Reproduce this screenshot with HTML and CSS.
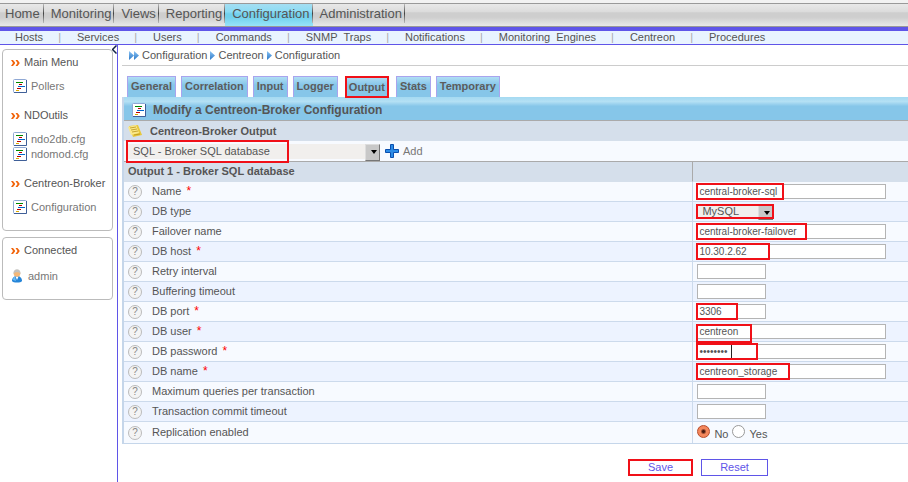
FILE: index.html
```html
<!DOCTYPE html>
<html lang="en">
<head>
    <meta charset="UTF-8">
    <meta name="viewport" content="width=device-width, initial-scale=1.0">
    <title>Centreon - Configuration</title>
    <link rel="stylesheet" href="styles.css">
</head>
<body>
    <svg class="sprite" aria-hidden="true">
        <linearGradient id="blue" x1="0" y1="0" x2="0" y2="1">
            <stop offset="0" stop-color="#8cc4f4"/>
            <stop offset="1" stop-color="#2a78c8"/>
        </linearGradient>
        <symbol id="icon-list" viewBox="0 0 14 14">
            <rect x="0.5" y="0.5" width="13" height="13" rx="1" fill="#fff" stroke="#8fa8d4"/>
            <path d="M13.5 1v12.500H1" fill="none" stroke="#3f5f98"/>
            <path d="M3 3.500h7" stroke="#080"/>
            <path d="M6 5.500h3" stroke="#b00"/>
            <path d="M5 7.500h7" stroke="#06c"/>
            <path d="M4 9.500h4" stroke="#b00"/>
            <path d="M3 11.500h3" stroke="#da0"/>
        </symbol>
        <symbol id="icon-raquo" viewBox="0 0 9 6">
            <path d="M0 0h2l2 2.500v1L2 6H0l2-3zM4.500 0h2l2 2.500v1l-2 2.500h-2l2-3z" fill="#f2640a"/>
        </symbol>
        <symbol id="icon-arrow" viewBox="0 0 5 9">
            <path d="M0 0l5 4.500-5 4.500z" fill="url(#blue)"/>
        </symbol>
    </svg>

    <div class="header">
        <ul class="menu">
            <li><a href="#">Home</a></li>
            <li><a href="#">Monitoring</a></li>
            <li><a href="#">Views</a></li>
            <li><a href="#">Reporting</a></li>
            <li class="active"><a href="#">Configuration</a></li>
            <li><a href="#">Administration</a></li>
        </ul>
        <ul class="submenu">
            <li><a href="#">Hosts</a></li>
            <li><a href="#">Services</a></li>
            <li><a href="#">Users</a></li>
            <li><a href="#">Commands</a></li>
            <li><a href="#">SNMP&nbsp; Traps</a></li>
            <li><a href="#">Notifications</a></li>
            <li><a href="#">Monitoring&nbsp; Engines</a></li>
            <li><a href="#">Centreon</a></li>
            <li><a href="#">Procedures</a></li>
        </ul>
    </div>

    <div class="main">
        <div class="sidebar">
            <svg class="toggle" viewBox="0 0 5 9"><path d="M4.500 0.500l-4 4 4 4" fill="none" stroke="#124" stroke-width="1.500"/></svg>
            <div class="box">
                <h3><svg class="raquo"><use href="#icon-raquo"/></svg>Main Menu</h3>
                <ul>
                    <li><svg class="icon"><use href="#icon-list"/></svg><a href="#">Pollers</a></li>
                </ul>
                <h3><svg class="raquo"><use href="#icon-raquo"/></svg>NDOutils</h3>
                <ul>
                    <li><svg class="icon"><use href="#icon-list"/></svg><a href="#">ndo2db.cfg</a></li>
                    <li><svg class="icon"><use href="#icon-list"/></svg><a href="#">ndomod.cfg</a></li>
                </ul>
                <h3><svg class="raquo"><use href="#icon-raquo"/></svg>Centreon-Broker</h3>
                <ul>
                    <li><svg class="icon"><use href="#icon-list"/></svg><a href="#">Configuration</a></li>
                </ul>
            </div>
            <div class="box">
                <h3><svg class="raquo"><use href="#icon-raquo"/></svg>Connected</h3>
                <div class="user">
                    <svg class="avatar" viewBox="0 0 12 14">
                        <path d="M1 12c0-3 2-5 5-5s5 2 5 5c-1 2-9 2-10 0z" fill="#2585d8"/>
                        <path d="M2 11c0-2 1-3 2-3.500l1 4.500z" fill="#6cbcf4"/>
                        <path d="M4.500 7.500h3L6 11z" fill="#fff"/>
                        <circle cx="6" cy="4.500" r="3.300" fill="#f5b878"/>
                        <path d="M2.500 5c-.8-6.500 7.800-6.500 7 0-1-1.500-2-2-3.500-1.800-1.500-.2-2.500.3-3.500 1.800z" fill="#c4c2be"/>
                    </svg>
                    <a href="#">admin</a>
                </div>
            </div>
        </div>

        <form class="content">
            <div class="path">
                <svg class="arrow"><use href="#icon-arrow"/></svg><svg class="arrow"><use href="#icon-arrow"/></svg><a href="#">Configuration</a>
                <svg class="arrow"><use href="#icon-arrow"/></svg><a href="#">Centreon</a>
                <svg class="arrow"><use href="#icon-arrow"/></svg><a href="#">Configuration</a>
            </div>

            <ul class="tabs">
                <li><a href="#">General</a></li>
                <li><a href="#">Correlation</a></li>
                <li><a href="#">Input</a></li>
                <li><a href="#">Logger</a></li>
                <li class="selected"><a href="#">Output</a></li>
                <li><a href="#">Stats</a></li>
                <li><a href="#">Temporary</a></li>
            </ul>

            <table class="list">
                <colgroup>
                    <col class="col-label">
                    <col>
                </colgroup>
                <tr class="title">
                    <th colspan="2"><div class="line"><svg class="icon"><use href="#icon-list"/></svg>Modify a Centreon-Broker Configuration</div></th>
                </tr>
                <tr class="section">
                    <th colspan="2">
                        <div class="line">
                            <svg class="icon" viewBox="0 0 14 12">
                                <path d="M1 1l9-1 4 10-9 2z" fill="#e8c83c"/>
                                <path d="M0 2l8-2 3 8-8 2z" fill="#fbe98a"/>
                                <path d="M2 3l6-1M3 5l6-1M4 7l6-1M6 10l6-1" stroke="#b8921c" stroke-width="0.800"/>
                            </svg>
                            Centreon-Broker Output
                        </div>
                    </th>
                </tr>
                <tr class="add">
                    <td colspan="2">
                        <div class="line">
                            <span class="select wide">
                                <select aria-label="Output type"><option>SQL - Broker SQL database</option></select>
                                <i class="mark"></i>
                            </span>
                            <a href="#" class="add-link">
                                <svg class="icon" viewBox="0 0 14 14"><path d="M5.500 0.500h3v5h5v3h-5v5h-3v-5h-5v-3h5z" fill="#2b8be6" stroke="#0a4fae"/></svg>Add</a>
                        </div>
                    </td>
                </tr>
                <tr class="section output">
                    <th>Output 1 - Broker SQL database</th>
                    <th></th>
                </tr>
                <tr>
                    <td><span class="help">?</span><label for="name">Name</label> <b>*</b></td>
                    <td><span class="field mark-name"><input type="text" id="name" value="central-broker-sql"><i class="mark"></i></span></td>
                </tr>
                <tr>
                    <td><span class="help">?</span><label for="type">DB type</label></td>
                    <td><span class="select"><select id="type"><option>MySQL</option></select><i class="mark"></i></span></td>
                </tr>
                <tr>
                    <td><span class="help">?</span><label for="failover">Failover name</label></td>
                    <td><span class="field mark-failover"><input type="text" id="failover" value="central-broker-failover"><i class="mark"></i></span></td>
                </tr>
                <tr>
                    <td><span class="help">?</span><label for="host">DB host</label> <b>*</b></td>
                    <td><span class="field mark-host"><input type="text" id="host" value="10.30.2.62"><i class="mark"></i></span></td>
                </tr>
                <tr>
                    <td><span class="help">?</span><label for="retry">Retry interval</label></td>
                    <td><span class="field short"><input type="text" id="retry"></span></td>
                </tr>
                <tr>
                    <td><span class="help">?</span><label for="buffering">Buffering timeout</label></td>
                    <td><span class="field short"><input type="text" id="buffering"></span></td>
                </tr>
                <tr>
                    <td><span class="help">?</span><label for="port">DB port</label> <b>*</b></td>
                    <td><span class="field short mark-port"><input type="text" id="port" value="3306"><i class="mark"></i></span></td>
                </tr>
                <tr>
                    <td><span class="help">?</span><label for="user">DB user</label> <b>*</b></td>
                    <td><span class="field mark-user"><input type="text" id="user" value="centreon"><i class="mark"></i></span></td>
                </tr>
                <tr>
                    <td><span class="help">?</span><label for="password">DB password</label> <b>*</b></td>
                    <td><span class="field mark-password"><input type="password" id="password" value="centreon"><i class="caret"></i><i class="mark"></i></span></td>
                </tr>
                <tr>
                    <td><span class="help">?</span><label for="dbname">DB name</label> <b>*</b></td>
                    <td><span class="field mark-dbname"><input type="text" id="dbname" value="centreon_storage"><i class="mark"></i></span></td>
                </tr>
                <tr>
                    <td><span class="help">?</span><label for="queries">Maximum queries per transaction</label></td>
                    <td><span class="field short"><input type="text" id="queries"></span></td>
                </tr>
                <tr>
                    <td><span class="help">?</span><label for="commit">Transaction commit timeout</label></td>
                    <td><span class="field short"><input type="text" id="commit"></span></td>
                </tr>
                <tr class="last">
                    <td><span class="help">?</span>Replication enabled</td>
                    <td>
                        <div class="radios">
                            <input type="radio" name="replication" id="no" checked><label for="no">No</label>
                            <input type="radio" name="replication" id="yes"><label for="yes">Yes</label>
                        </div>
                    </td>
                </tr>
            </table>

            <div class="buttons">
                <button type="button" class="save">Save</button>
                <button type="reset">Reset</button>
            </div>
        </form>
    </div>
</body>
</html>
```

FILE: styles.css
```css
* {
    padding: 0;
    margin: 0;
    box-sizing: border-box;
}
body {
    font: 11px/14px "Liberation Sans", Arial, sans-serif;
    color: #555;
    background: #fff;
    min-height: 100vh;
    display: flex;
    flex-direction: column;
}
a {
    color: inherit;
    text-decoration: none;
}
ul {
    list-style: none;
}
svg {
    flex: none;
}
.sprite {
    position: absolute;
    width: 0;
    height: 0;
}

/* header */
.header {
    border-top: 3px solid #f2f2f2;
}
.menu {
    display: flex;
    height: 24px;
    font-size: 13px;
    line-height: 20px;
    border-top: 1px solid #999;
    border-bottom: 1px solid #999;
    background: linear-gradient(#e8e8e8, #dcdcdc 35%, #cecece 40%, #cecece 60%, #e8e8e8);
}
.menu li {
    padding: 0 3px 0 7px;
    background: linear-gradient(#bbb, #444 50%, #bbb) right top / 1px 19px no-repeat;
}
.menu li:first-child {
    padding: 0 4px 0 5px;
}
.menu .active {
    background: linear-gradient(#bbb, #444 50%, #bbb) right top / 1px 19px no-repeat,
        linear-gradient(#a4def2, #8cdcf4 35%, #72d0ec 45%, #72d0ec 60%, #98e4f8);
}
.submenu {
    display: flex;
    height: 18px;
    line-height: 13px;
    border-top: 4px solid #5f55e8;
    border-bottom: 1px solid #5f55e8;
    background: #e9f4ff;
}
.submenu li {
    padding-left: 15px;
}
.submenu li + li::before {
    content: "|";
    color: #aaa;
    padding-right: 16px;
}

.main {
    flex: 1;
    display: flex;
}

/* left column */
.sidebar {
    position: relative;
    flex: none;
    width: 118px;
    padding: 4px 4px 0 2px;
    border-right: 1px solid #5f55e8;
}
.toggle {
    position: absolute;
    right: 0;
    top: 0;
    width: 5px;
    height: 9px;
}
.box {
    margin-bottom: 6px;
    padding: 5px 0 16px 8px;
    width: 111px;
    border: 1px solid #bbb;
    border-radius: 4px;
}
.box h3 {
    display: flex;
    align-items: center;
    font-size: 11px;
    font-weight: normal;
    line-height: 15px;
    white-space: nowrap;
}
.raquo {
    width: 9px;
    height: 6px;
    margin-right: 4px;
}
.box ul {
    padding: 8px 0 15px 2px;
}
.box ul:last-child {
    padding-bottom: 0;
}
.box li {
    display: flex;
    align-items: center;
    height: 15px;
    color: #777;
}
.icon {
    width: 14px;
    height: 14px;
    margin-right: 4px;
}
.user {
    display: flex;
    align-items: center;
    padding-top: 11px;
    color: #777;
}
.avatar {
    width: 12px;
    height: 14px;
    margin-right: 5px;
}

/* right column */
.content {
    flex: 1;
    min-width: 0;
    padding-left: 4px;
}
.path {
    display: flex;
    align-items: center;
    height: 21px;
    padding-left: 7px;
    border-bottom: 1px solid #ccc;
}
.path a {
    padding: 0 3px;
}
.arrow {
    width: 5px;
    height: 9px;
}
.tabs {
    display: flex;
    gap: 5px;
    padding: 10px 0 0 5px;
    font-weight: bold;
}
.tabs li {
    height: 21px;
    padding: 0 3px;
    line-height: 19px;
    border: 1px solid #a9a4ee;
    border-bottom: 0;
    color: #5c5c5c;
    background: linear-gradient(#b0def4, #86c6e9 40%);
}
.tabs .selected {
    position: relative;
    margin: 0 2px;
    line-height: 20px;
}
.tabs .selected::after {
    content: "";
    position: absolute;
    inset: -1px;
    border: 2px solid #f01018;
}

.list {
    width: 100%;
    table-layout: fixed;
    border-collapse: separate;
    border-spacing: 0;
    border-left: 2px solid #c5d6ea;
    border-bottom: 1px solid #c5d6ea;
}
.col-label {
    width: 72.5%;
}
.list td,
.list th {
    height: 20px;
    padding-left: 4px;
    text-align: left;
    vertical-align: middle;
    line-height: 13px;
    border-bottom: 1px solid #ccdaec;
    background: #f7faff;
}
.list tr:nth-child(even) td {
    background: #edf3ff;
}
.list td + td,
.list th + th {
    border-left: 1px solid #ccdaec;
}
.list .output th + th {
    border-left-color: #aaa;
}
.line {
    display: flex;
    align-items: center;
    line-height: 15px;
}
.list .title th {
    height: 24px;
    padding: 2px 0 0 8px;
    font-size: 12px;
    border-bottom-color: #aaa;
    background: linear-gradient(#a5daf2, #b4e0f4 20%, #86c6e9 40%);
}
.title .line,
.section .line {
    line-height: 16px;
}
.title .icon {
    margin-right: 7px;
}
.list .section th {
    background: #d5dfeb;
    border-bottom-color: #d5dfeb;
}
.section .icon {
    height: 12px;
    margin-right: 8px;
}
.list .add td {
    height: 21px;
    border-bottom-color: #aaa;
}
.add-link {
    display: flex;
    align-items: center;
    padding-left: 5px;
    color: #777;
}
.list td:first-child {
    line-height: 15px;
}
.list .last td {
    height: 21px;
    border-bottom: 0;
}
.help {
    display: inline-block;
    width: 14px;
    height: 14px;
    margin-right: 10px;
    border: 1px solid #bbb;
    border-radius: 50%;
    font-size: 10px;
    line-height: 12px;
    text-align: center;
    color: #888;
    background: #f4f4f4;
    vertical-align: bottom;
}
.list b {
    padding-left: 2px;
    font-size: 12px;
    font-weight: normal;
    line-height: 12px;
    color: #f00;
}

/* fields */
.field,
.select {
    position: relative;
    display: block;
    width: 189px;
}
.short {
    width: 69px;
}
.field input {
    display: block;
    width: 100%;
    height: 15px;
    padding: 0 1px;
    border: 1px solid #b4b4b4;
    font: 10px/13px "Liberation Sans", Arial, sans-serif;
    color: #555;
    background: #fff;
}
.select {
    width: 76px;
    height: 13px;
}
.select.wide {
    width: 252px;
    height: 15px;
}
.select select {
    display: block;
    appearance: none;
    width: 100%;
    height: 100%;
    padding-left: 5px;
    border: 0;
    border-radius: 0;
    font: 11px/13px "Liberation Sans", Arial, sans-serif;
    color: #555;
    background: #f1efed;
}
.select::before {
    content: "";
    position: absolute;
    right: 0;
    top: 0;
    width: 13px;
    height: 100%;
    border: 1px solid #ddd;
    border-right-color: #777;
    border-bottom-color: #777;
    background: #c8c8c8;
}
.select::after {
    content: "";
    position: absolute;
    right: 3px;
    top: 6px;
    border: 3px solid transparent;
    border-top: 4px solid #000;
    border-bottom: 0;
}

/* red frames */
.mark {
    position: absolute;
    z-index: 1;
    left: -1px;
    top: -1px;
    width: 100%;
    height: 17px;
    border: 2px solid #f01018;
    pointer-events: none;
}
.select .mark {
    width: 78px;
    height: 15px;
}
.wide .mark {
    left: -2px;
    top: -4px;
    width: 163px;
    height: 23px;
}
.mark-name .mark {
    width: 88px;
}
.mark-failover .mark {
    width: 111px;
}
.mark-host .mark {
    width: 74px;
}
.mark-port .mark {
    width: 42px;
}
.mark-user .mark {
    width: 56px;
    top: 0;
    height: 19px;
}
.mark-password .mark {
    width: 62px;
}
.mark-dbname .mark {
    width: 94px;
}
.caret {
    position: absolute;
    left: 34px;
    top: 1px;
    width: 1px;
    height: 13px;
    background: #222;
}

.radios {
    display: flex;
    align-items: flex-end;
}
.radios input {
    appearance: none;
    width: 13px;
    height: 13px;
    margin-bottom: 3px;
    border: 1px solid #999;
    border-radius: 50%;
    background: #fff;
}
.radios input:checked {
    border-color: #b84a28;
    background: radial-gradient(#4a1a10 1px, #f4875c 3px);
}
.radios label {
    padding: 0 4px;
}

.buttons {
    display: flex;
    justify-content: flex-end;
    gap: 8px;
    padding: 15px 140px 0 0;
}
.buttons button {
    width: 67px;
    height: 17px;
    border: 1px solid #5f55e8;
    font: 11px/15px "Liberation Sans", Arial, sans-serif;
    color: #5f55e8;
    background: #fff;
}
.buttons .save {
    width: 65px;
    border: 2px solid #f01018;
    line-height: 13px;
}
```
